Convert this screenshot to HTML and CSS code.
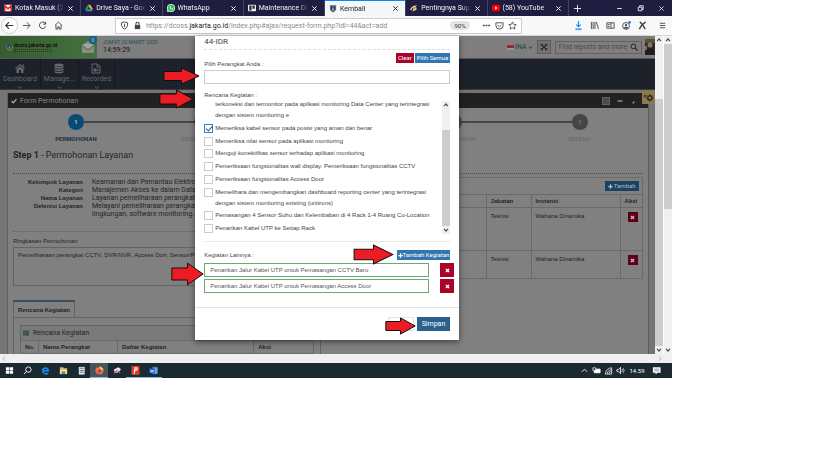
FILE: index.html
```html
<!DOCTYPE html>
<html lang="id">
<head>
<meta charset="utf-8">
<title>Kembali</title>
<link rel="stylesheet" href="styles.css">
</head>
<body>
<svg class="defs" aria-hidden="true">
  <symbol id="x" viewBox="0 0 8 8"><path d="M1.5 1.5l5 5M6.5 1.5l-5 5" stroke="currentColor" stroke-width="1.1" fill="none"/></symbol>
  <symbol id="times" viewBox="0 0 8 8"><path d="M1.5 1.5l5 5M6.5 1.5l-5 5" stroke="currentColor" stroke-width="2.2" fill="none"/></symbol>
  <symbol id="plus" viewBox="0 0 8 8"><path d="M4 0.500v7M.5 4h7" stroke="currentColor" stroke-width="2" fill="none"/></symbol>
  <symbol id="down" viewBox="0 0 8 8"><path d="M1.500 2.500l2.500 3 2.500-3" stroke="currentColor" stroke-width="1.500" fill="none"/></symbol>
  <symbol id="up" viewBox="0 0 8 8"><path d="M1.500 5.500l2.500-3 2.500 3" stroke="currentColor" stroke-width="1.500" fill="none"/></symbol>
  <symbol id="search" viewBox="0 0 10 10"><circle cx="4.200" cy="4.200" r="3" fill="none" stroke="currentColor" stroke-width="1.200"/><path d="M6.500 6.500l3 3" stroke="currentColor" stroke-width="1.500"/></symbol>
  <symbol id="crest" viewBox="0 0 10 10"><path d="M1 1h8v5L5 9.500 1 6z" fill="#cfd4d8"/><path d="M1.500 1.500h7V6L5 9 1.500 6z" fill="#1d4680"/><path d="M5 2.500l1 4H4z" fill="#eef"/><path d="M1 .5h8v1H1z" fill="#333"/><path d="M1 6l4 3.500L9 6" stroke="#d8a02a" fill="none"/></symbol>
  <symbol id="arrow" viewBox="0 0 38 20" preserveAspectRatio="none"><path d="M1 5h18V1l18 9-18 9v-4H1z" fill="#ed1c24" stroke="#111" stroke-width="1" vector-effect="non-scaling-stroke"/></symbol>
</svg>

<main class="desktop">
  <nav class="tabs" aria-label="Tab">
    <div class="tab"><svg class="fav" viewBox="0 0 10 10"><rect y="1" width="10" height="8" rx="1" fill="#fff"/><path d="M1 9V2l4 4 4-4v7" fill="none" stroke="#d93025" stroke-width="2"/></svg><span>Kotak Masuk (2.194</span><svg class="close"><use href="#x"/></svg></div>
    <div class="tab"><svg class="fav" viewBox="0 0 10 10"><path d="M3.500 1h3L10 6.500H7z" fill="#fbbc04"/><path d="M3.500 1L0 6.500 1.500 9 5 3.500z" fill="#0f9d58"/><path d="M3 6.500h7L8.500 9h-7z" fill="#4285f4"/></svg><span>Drive Saya - Google</span><svg class="close"><use href="#x"/></svg></div>
    <div class="tab"><svg class="fav" viewBox="0 0 10 10"><circle cx="5" cy="5" r="5" fill="#e8f8ea"/><path d="M0 10l.8-3L3 9z" fill="#e8f8ea"/><circle cx="5" cy="5" r="4" fill="#2fc351"/><path d="M3.300 2.800c-.8 2 1.500 4.700 4 4.200l.3-1-1.200-.6-.7.6C5 5.700 4.300 5 4.200 4.400l.5-.6-.5-1z" fill="#fff"/></svg><span>WhatsApp</span><svg class="close"><use href="#x"/></svg></div>
    <div class="tab"><svg class="fav" viewBox="0 0 10 10"><rect y="1" width="10" height="8" rx="1" fill="#eceef2"/><path d="M1.500 2h3v6h-3zM5.500 2h3v4h-3z" fill="#30344e"/></svg><span>Maintenance DC D</span><svg class="close"><use href="#x"/></svg></div>
    <div class="tab active"><svg class="fav"><use href="#crest"/></svg><span>Kembali</span><svg class="close"><use href="#x"/></svg></div>
    <div class="tab"><svg class="fav" viewBox="0 0 10 10"><path d="M0 7q3-6 9-5L6 4q-4 0-4 4z" fill="#d9dce4"/><circle cx="6" cy="6" r="2.500" fill="#d99a36"/><path d="M3 9l4-3" stroke="#fff"/></svg><span>Pentingnya Supply</span><svg class="close"><use href="#x"/></svg></div>
    <div class="tab"><svg class="fav" viewBox="0 0 10 10"><rect y="1" width="10" height="8" rx="2" fill="#f00"/><path d="M4 3l3 2-3 2z" fill="#fff"/></svg><span>(58) YouTube</span><svg class="close"><use href="#x"/></svg></div>
    <div class="window-tools">
      <svg viewBox="0 0 10 10"><path d="M5 1v8M1 5h8" stroke="currentColor"/></svg>
      <i></i>
      <svg viewBox="0 0 10 10"><path d="M2.500 5h5" stroke="currentColor"/></svg>
      <svg viewBox="0 0 10 10"><path d="M2.500 3.500h4v4h-4zM4 3.500V2h4v4H6.500" fill="none" stroke="currentColor"/></svg>
      <svg viewBox="0 0 10 10"><path d="M2.500 2.500l5 5M7.500 2.500l-5 5" stroke="currentColor" stroke-width=".8"/></svg>
    </div>
  </nav>

  <div class="toolbar">
    <div class="nav-icons">
      <svg class="back" viewBox="0 0 18 18"><circle cx="9" cy="9" r="8.500" fill="#fff" stroke="#b9b9bd" stroke-width=".7"/><path d="M13 9H5.500M8.500 5.500L5 9l3.500 3.500" fill="none" stroke="#333" stroke-width="1.200"/></svg>
      <svg viewBox="0 0 10 10"><path d="M1 5h7.500M5.500 1.500L9 5 5.500 8.500" fill="none" stroke="currentColor"/></svg>
      <svg viewBox="0 0 10 10"><path d="M8 2.500A3.600 3.600 0 1 0 8.600 6M8.500 1v2.500H6" fill="none" stroke="currentColor" stroke-width="1.100"/></svg>
      <svg viewBox="0 0 10 10"><path d="M1 5l4-3.800L9 5M2.200 4.500V9h2V6.500h1.600V9h2V4.500" fill="none" stroke="currentColor"/></svg>
    </div>
    <div class="address">
      <svg viewBox="0 0 10 10"><path d="M5 1l3.500 1c0 4-1 6-3.500 7C2.500 8 1.500 6 1.500 2zM5 3v4" fill="none" stroke="currentColor"/></svg>
      <svg viewBox="0 0 10 10"><rect x="2" y="4.500" width="6" height="4.500" fill="currentColor"/><path d="M3.300 5V3a1.700 1.700 0 0 1 3.400 0v2" fill="none" stroke="currentColor" stroke-width="1.200"/></svg>
      <p>https://dcoss.<b>jakarta.go.id</b>/index.php#ajax/request-form.php?idl=44&amp;act=add</p>
      <span class="zoom">90%</span>
      <svg viewBox="0 0 10 10"><path d="M1 5h2M4 5h2M7 5h2" stroke="currentColor" stroke-width="1.500"/></svg>
      <svg viewBox="0 0 10 10"><path d="M1 2h8v3a4 4 0 0 1-8 0zM3 4.500l2 1.800 2-1.800" fill="none" stroke="currentColor"/></svg>
      <svg viewBox="0 0 10 10"><path d="M5 1l1.200 2.700 3 .3L7 6l.7 3L5 7.500 2.300 9 3 6 .8 4l3-.3z" fill="none" stroke="currentColor" stroke-width=".9"/></svg>
    </div>
    <div class="tool-icons">
      <svg class="blue" viewBox="0 0 10 10"><path d="M5 0v6M2.500 4L5 6.500 7.500 4M1.500 9h7" fill="none" stroke="currentColor" stroke-width="1.200"/></svg>
      <svg viewBox="0 0 10 10"><path d="M1.500 1v8M3.500 1v8M5.500 1v8M7 1l2.500 8" fill="none" stroke="currentColor"/></svg>
      <svg viewBox="0 0 10 10"><path d="M1 2h8v6H1zM5.500 2v6M2 4h2M2 6h2" fill="none" stroke="currentColor"/></svg>
      <svg viewBox="0 0 10 10"><circle cx="4.500" cy="5.500" r="3.800" fill="none" stroke="currentColor"/><circle cx="4.500" cy="4.500" r="1.300" fill="currentColor"/><path d="M2 7.500q2.500-2 5 0-2.500 2-5 0z" fill="currentColor"/><circle cx="8.500" cy="1.500" r="1.500" fill="#0a84ff"/></svg>
      <svg viewBox="0 0 10 10"><path d="M2 1q3 2 6 8M8.500 1Q4 4 1.500 9" fill="none" stroke="currentColor" stroke-width="1.600"/></svg>
      <svg class="menu" viewBox="0 0 10 10"><path d="M2 2.500h6M2 5h6M2 7.500h6" stroke="currentColor"/></svg>
    </div>
  </div>

  <div class="viewport">
    <div class="page">
      <header class="site-head">
        <div class="brand">
          <svg class="brand-crest"><use href="#crest"/></svg>
          <div class="brand-name"><b>dcoss.jakarta.go.id</b><i></i><i></i></div>
          <div class="mail"><svg viewBox="0 0 12 12"><path d="M0 4l6-4 6 4v8H0z" fill="#8a8d83"/><path d="M1 5l5 4 5-4" fill="none" stroke="#4f6547"/><path d="M2 3h8v2L6 8 2 5z" fill="#a3a69c"/></svg><em>0</em></div>
        </div>
        <div class="clock"><small>JUM'AT, 20 MARET 2020</small><span>14:59:29</span></div>
        <div class="head-tools">
          <a class="lang" href="#"><svg class="flag" viewBox="0 0 8 5"><path d="M0 0h8v3H0z" fill="#9b1c26"/><path d="M0 3h8v2H0z" fill="#999"/></svg>INA<svg class="tiny"><use href="#down"/></svg></a>
          <button class="full" aria-label="Layar penuh"><svg viewBox="0 0 10 10"><path d="M1 1h3L1 4zM9 1v3L6 1zM1 9V6l3 3zM9 9H6l3-3z" fill="currentColor"/><path d="M2 2l6 6M8 2L2 8" stroke="currentColor" stroke-width="1.500"/></svg></button>
          <label class="find"><input type="text" placeholder="Find reports and more" aria-label="Cari"><svg><use href="#search"/></svg></label>
          <svg class="avatar" viewBox="0 0 10 16"><rect width="10" height="16" fill="#2b2a22"/><path d="M0 0h10v4H0z" fill="#555236"/><circle cx="5" cy="6" r="2.500" fill="#8c7463"/><path d="M0 16q0-7 5-7t5 7z" fill="#1d1d1d"/><path d="M0 7h2v4H0z" fill="#77705b"/></svg>
        </div>
      </header>

      <nav class="mainnav">
        <a href="#"><svg viewBox="0 0 10 10"><path d="M0 5l5-4.500L10 5l-.7.700L5 2 .7 5.700z" fill="currentColor"/><path d="M1.500 5.800L5 3l3.500 2.800V9.500H6v-3H4v3H1.500zM7.500 1H9v2.500L7.500 2z" fill="currentColor"/></svg>Dashboard<svg class="tiny"><use href="#down"/></svg></a>
        <a href="#"><svg viewBox="0 0 10 10"><ellipse cx="5" cy="1.500" rx="4.500" ry="1.500" fill="currentColor"/><path d="M.5 2.500q4.500 2 9 0v1.700q-4.500 2-9 0zM.5 5q4.500 2 9 0v1.700q-4.500 2-9 0zM.5 7.500q4.500 2 9 0V9q-4.500 2-9 0z" fill="currentColor"/></svg>Manage...<svg class="tiny"><use href="#down"/></svg></a>
        <a href="#"><svg viewBox="0 0 10 10"><path d="M1 .5h5.500L9 3v6.500H1zM6 .5V3.500h3" fill="none" stroke="currentColor"/><path d="M2.500 5h3v3h-3zM5.500 6.500L7.500 5v3z" fill="currentColor"/></svg>Recorded<svg class="tiny"><use href="#down"/></svg></a>
      </nav>

      <section class="widget">
        <div class="widget-head"><svg viewBox="0 0 10 10"><path d="M1 5l3 3 5-6" fill="none" stroke="currentColor" stroke-width="2.200"/></svg><h1>Form Permohonan</h1><span class="swatch"></span><svg viewBox="0 0 10 10"><path d="M1 5h8" stroke="currentColor" stroke-width="2"/></svg><svg viewBox="0 0 10 10"><path d="M1 9l3-3" stroke="currentColor" stroke-width="2"/></svg></div>
        <div class="widget-body">
          <ol class="steps">
            <li class="now"><b>1</b>PERMOHONAN</li>
            <li><b>2</b>PERSETUJUAN</li>
            <li><b>3</b>PELAKSANAAN</li>
            <li><b>4</b>BUAT LAPORAN</li>
            <li><b>5</b>SELESAI</li>
          </ol>
          <h2><b>Step 1</b> - Permohonan Layanan</h2>
          <div class="columns">
            <div class="left">
              <dl>
                <dt>Kelompok Layanan</dt><dd>Keamanan dan Pemantau Elektronik</dd>
                <dt>Kategori</dt><dd>Manajemen Akses ke dalam Datacenter</dd>
                <dt>Nama Layanan</dt><dd>Layanan pemeliharaan perangkat keamanan</dd>
                <dt>Defenisi Layanan</dt><dd>Melayani pemeliharaan perangkat CCTV,<br>lingkungan, software monitoring.</dd>
              </dl>
              <label class="summary">Ringkasan Permohonan
                <textarea>Pemeliharaan perangkat CCTV, DVR/NVR, Access Dorr, Sensor/Perangkat</textarea>
              </label>
              <div class="subtab"><button>Rencana Kegiatan</button></div>
              <div class="subpanel">
                <h3><svg viewBox="0 0 10 10"><path d="M0 1h10v8H0z" fill="#2f4a35"/><path d="M0 3.500h10M0 6h10M3 1v8" stroke="#58705c"/></svg>Rencana Kegiatan</h3>
                <table class="plan">
                  <tr><th>No.</th><th>Nama Perangkat</th><th>Daftar Kegiatan</th><th>Aksi</th></tr>
                </table>
              </div>
            </div>
            <div class="right">
              <div class="people-head"><button class="add"><svg><use href="#plus"/></svg>Tambah</button></div>
              <table class="people">
                <tr><th>Nama</th><th>Jabatan</th><th>Instansi</th><th>Aksi</th></tr>
                <tr class="tall"><td></td><td>Teknisi</td><td>Wahana Dinamika</td><td><button class="del" aria-label="Hapus"><svg><use href="#times"/></svg></button></td></tr>
                <tr><td></td><td>Teknisi</td><td>Wahana Dinamika</td><td><button class="del" aria-label="Hapus"><svg><use href="#times"/></svg></button></td></tr>
              </table>
            </div>
          </div>
        </div>
      </section>

      <button class="gear" aria-label="Pengaturan"><svg viewBox="0 0 12 12"><circle cx="7.500" cy="7" r="2.300" fill="none" stroke="currentColor" stroke-width="1.500"/><path d="M7.500 3v1.500M7.500 9.500V11M3.800 7h1.500M10 7h1.500M5 4.500l1 1M10 4.500l-1 1M5 9.500l1-1M10 9.500l-1-1" stroke="currentColor"/><circle cx="2.500" cy="5" r="1.200" fill="none" stroke="currentColor"/></svg></button>

      <section class="modal" role="dialog" aria-label="44-IDR">
        <h2>44-IDR</h2>
        <div class="row first"><label for="device">Pilih Perangkat Anda :</label><span><button class="btn red">Clear</button><button class="btn">Pilih Semua</button></span></div>
        <input id="device" class="field" type="text">
        <p class="caption">Rencana Kegiatan :</p>
        <div class="picker">
          <ul>
            <li class="rest">terkoneksi dan termonitor pada aplikasi monitoring Data Center yang terintegrasi<br>dengan sistem monitoring e</li>
            <li><label><input type="checkbox" checked><span>Memeriksa kabel sensor pada posisi yang aman dan benar</span></label></li>
            <li><label><input type="checkbox"><span>Memeriksa nilai sensor pada aplikasi monitoring</span></label></li>
            <li><label><input type="checkbox"><span>Menguji konektifitas sensor terhadap aplikasi monitoring</span></label></li>
            <li><label><input type="checkbox"><span>Pemeriksaan fungsionalitas wall display. Pemeriksaan fungsionalitas CCTV</span></label></li>
            <li><label><input type="checkbox"><span>Pemeriksaan fungsionalitas Access Door</span></label></li>
            <li><label><input type="checkbox"><span>Memelihara dan mengembangkan dashboard reporting center yang terintegrasi<br>dengan sistem monitoring existing (unitrons)</span></label></li>
            <li><label><input type="checkbox"><span>Pemasangan 4 Sensor Suhu dan Kelembaban di 4 Rack 1-4 Ruang Co-Location</span></label></li>
            <li><label><input type="checkbox"><span>Penarikan Kabel UTP ke Setiap Rack</span></label></li>
          </ul>
          <div class="bar list-bar"><svg><use href="#up"/></svg><i></i><svg><use href="#down"/></svg></div>
        </div>
        <div class="row others"><span>Kegiatan Lainnya :</span><button class="btn tight"><svg><use href="#plus"/></svg>Tambah Kegiatan</button></div>
        <div class="entry"><input type="text" aria-label="Kegiatan 1" value="Penarikan Jalur Kabel UTP untuk Pemasangan CCTV Baru"><button class="del big" aria-label="Hapus"><svg><use href="#times"/></svg></button></div>
        <div class="entry"><input type="text" aria-label="Kegiatan 2" value="Penarikan Jalur Kabel UTP untuk Pemasangan Access Door"><button class="del big" aria-label="Hapus"><svg><use href="#times"/></svg></button></div>
        <footer><button class="cancel" aria-label="Batal"></button><button class="save">Simpan</button></footer>
      </section>
    </div>
    <div class="bar inner-bar"><svg><use href="#up"/></svg><i></i><svg><use href="#down"/></svg></div>
    <div class="bar outer-bar"><svg><use href="#up"/></svg><i></i><svg><use href="#down"/></svg></div>
    <svg class="arrow a1"><use href="#arrow"/></svg>
    <svg class="arrow a2"><use href="#arrow"/></svg>
    <svg class="arrow a3"><use href="#arrow"/></svg>
    <svg class="arrow a4"><use href="#arrow"/></svg>
    <svg class="arrow a5"><use href="#arrow"/></svg>
  </div>
  <div class="hbar"><svg viewBox="0 0 8 8"><path d="M5 2L3 4l2 2" fill="none" stroke="#aaa"/></svg><svg viewBox="0 0 8 8"><path d="M3 2l2 2-2 2" fill="none" stroke="#aaa"/></svg></div>

  <footer class="taskbar">
    <div class="apps">
      <span><svg viewBox="0 0 10 10"><path d="M1 1.500h3.700v3.200H1zM5.300 1.500H9v3.200H5.300zM1 5.300h3.700v3.200H1zM5.300 5.300H9v3.200H5.300z" fill="#fff"/></svg></span>
      <span><svg viewBox="0 0 10 10"><circle cx="6" cy="4" r="3" fill="none" stroke="#fff"/><path d="M4 6L1 9" stroke="#fff"/></svg></span>
      <span><svg viewBox="0 0 10 10"><path d="M2.200 5.500H8C8 1 2.500 1.500 1.500 5M2 5.500c0 3.500 4 4 6 2.500" fill="none" stroke="#1587e0" stroke-width="2"/></svg></span>
      <span><svg viewBox="0 0 10 10"><path d="M1 1.500h3.500l1 1H9V9H1z" fill="#e8b84a"/><path d="M1 4h8v5H1z" fill="#f7df90"/><path d="M3 6h4v3H3z" fill="#3d91d3"/></svg></span>
      <span><svg viewBox="0 0 10 10"><rect x="2" y="1" width="6.500" height="8.500" fill="#e5e9ea"/><path d="M3 2.500h4.500M3 5h4.500M3 7h4.500" stroke="#54656b"/></svg></span>
      <span class="on active"><svg viewBox="0 0 10 10"><path d="M5 .500q4 1 4.500 5A4.500 4.500 0 1 1 1 3l1-2 1 1.500z" fill="#ff7a1a"/><path d="M5 .5q4 1 4.500 4L6 4z" fill="#ffcf3a"/><circle cx="5.300" cy="5.600" r="2" fill="#8a42d6"/><path d="M1 5q2 3 6 3-4 2-6-3z" fill="#f3304d"/></svg></span>
      <span><svg viewBox="0 0 10 10"><path d="M1 4l5-2.500 3 2L6 7l-4 1z" fill="#dbe5ef"/><path d="M1 8l4-3M6 6l2 2" stroke="#d7434c" stroke-width="1.300"/></svg></span>
      <span class="on"><svg viewBox="0 0 10 10"><rect x=".5" width="9" height="10" rx="1" fill="#df3a26"/><path d="M3.500 8.500L4.500 2h2q1.500 2-2 3" fill="none" stroke="#fff" stroke-width="1.200"/></svg></span>
      <span class="on"><svg viewBox="0 0 10 10"><path d="M4 1h5.500v8H4z" fill="#3f8fe0"/><path d="M4 3h5.500M4 5h5.500M4 7h5.500" stroke="#bcdcff" stroke-width=".6"/><path d="M.5 2.500h6v5.500h-6z" fill="#1a5dbe"/><path d="M1.500 4l1 3 1-2.500 1 2.500 1-3" fill="none" stroke="#fff" stroke-width=".7"/></svg></span>
    </div>
    <div class="tray">
      <svg viewBox="0 0 10 10"><path d="M2 6.500l3-3 3 3" fill="none" stroke="currentColor"/></svg>
      <svg viewBox="0 0 10 10"><path d="M2.500 3.500H9v4H2.500z" fill="#fff" stroke="#fff"/><path d="M1 2h3v3H1z" fill="#1b2a30" stroke="#fff" stroke-width=".8"/></svg>
      <svg viewBox="0 0 10 10"><path d="M1.500 9A7 7 0 0 1 8.500 2M3.500 9a5 5 0 0 1 5-5M5.500 9a3 3 0 0 1 3-3M8.500 2v7h-7" fill="none" stroke="currentColor" stroke-width=".8"/></svg>
      <svg viewBox="0 0 10 10"><path d="M1 4h1.500L5 1.500v7L2.500 6H1z" fill="none" stroke="currentColor" stroke-width=".9"/><path d="M6.500 3.500q1 1.500 0 3M8 2.500q2 2.500 0 5" fill="none" stroke="currentColor" stroke-width=".8"/></svg>
      <time>14.59</time>
      <svg viewBox="0 0 10 10"><path d="M1 1.500h8.500v6H6l-2 2v-2H1z" fill="#fff"/><path d="M2.500 3.500h5.500M2.500 5.500h5.500" stroke="#62727a" stroke-width=".8"/></svg>
    </div>
  </footer>
</main>
</body>
</html>
```
FILE: styles.css
```css
* { box-sizing: border-box; }
body { margin: 0; background: #fff; font: 6px/8px "Liberation Sans", Arial, sans-serif; }
h1, h2, h3, p, ul, ol, dl, dd { margin: 0; padding: 0; font-size: inherit; font-weight: normal; }
ul, ol { list-style: none; }
button, input, textarea { font: inherit; color: inherit; margin: 0; padding: 0; border: 0; border-radius: 0; background: none; outline: 0; }
a { color: inherit; text-decoration: none; }
svg { display: block; flex: none; }
.defs { position: absolute; width: 0; height: 0; }
.desktop { width: 82%; overflow: hidden; }

/* browser tabs */
.tabs { display: flex; height: 16px; background: #1f1d40; color: #f3f3f7; font: 7px/16px Roboto, sans-serif; }
.tab { flex: 0 0 12.1%; min-width: 0; display: flex; align-items: center; gap: 3px; padding: 0 6px 0 4px; border-right: 1px solid #43415f; }
.tab span { flex: 1; min-width: 0; white-space: nowrap; -webkit-mask-image: linear-gradient(90deg, #000 80%, transparent 100%); mask-image: linear-gradient(90deg, #000 80%, transparent 100%); }
.tab.active { background: #f5f6f7; color: #222; border-top: 1px solid #0a84ff; }
.fav { width: 8px; height: 8px; }
.close { width: 7px; height: 7px; }
.window-tools { flex: 1; display: flex; align-items: center; justify-content: space-between; padding: 0 6px 0 4px; }
.window-tools svg { width: 9px; height: 9px; }
.window-tools i { width: 10px; }

/* browser toolbar */
.toolbar { display: flex; align-items: center; height: 20px; background: #f8f8f9; color: #444; border-bottom: 1px solid #d5d5d8; }
.toolbar svg { width: 9px; height: 9px; }
.nav-icons { display: flex; align-items: center; gap: 7px; padding-left: 1px; width: 115px; }
.nav-icons .back { width: 17px; height: 17px; margin-right: -3px; }
.address { flex: 1; display: flex; align-items: center; gap: 4px; height: 16px; padding: 0 4px; background: #fff; border: 1px solid #ccccd0; }
.address p { flex: 1; white-space: nowrap; color: #8b8b90; font: 7px/12px Roboto, sans-serif; }
.address b { font-weight: normal; color: #222; }
.zoom { padding: 0 4px; margin-right: 8px; border-radius: 5px; background: #e4e4e7; font: 6px/9px Roboto, sans-serif; color: #333; }
.tool-icons { display: flex; align-items: center; justify-content: flex-end; gap: 7px; width: 150px; padding-right: 5px; }
.tool-icons .blue { color: #0a84ff; }
.tool-icons .menu { margin-left: 4px; }

/* scrolled page */
.viewport { position: relative; display: flex; }
.page { position: relative; flex: 1; min-width: 0; background: #757575; color: #252525; }
.bar { display: flex; flex-direction: column; align-items: center; justify-content: space-between; width: 8px; background: #f0f0f0; color: #444; }
.bar svg { width: 6px; height: 8px; }
.bar i { width: 100%; background: #cdcdcd; }
.inner-bar i { flex: 1; margin-top: 55px; }
.outer-bar { margin-left: 1px; }
.outer-bar i { height: 165px; margin-bottom: auto; }
.hbar { display: flex; justify-content: space-between; height: 9px; padding-right: 8px; background: #f0f0f0; }
.hbar svg { width: 8px; height: 9px; }

.site-head { display: flex; height: 23px; background: #7e7e7e; border-bottom: 1px solid #555; }
.brand { display: flex; align-items: center; gap: 1px; width: 97px; padding-left: 6px; background: linear-gradient(90deg, #355c2f, #477240); color: #111; }
.brand-crest { width: 7px; height: 9px; opacity: .6; }
.brand-name { width: 42px; font: 5px/6px Roboto, sans-serif; white-space: nowrap; }
.brand-name b { display: block; }
.brand-name i { display: block; width: 38px; border-top: 1px dotted #22351e; margin-top: 1px; }
.mail { position: relative; margin-left: 25px; }
.mail svg { width: 12px; height: 12px; }
.mail em { position: absolute; left: 7px; top: -5px; width: 8px; height: 8px; border-radius: 4px; background: #12608c; color: #b5c4cc; font: 5px/8px Roboto, sans-serif; text-align: center; }
.clock { display: flex; flex-direction: column; padding: 3px 6px; }
.clock small { font: 5px/7px Roboto, sans-serif; color: #254f58; }
.clock span { font: 7px/8px Roboto, sans-serif; color: #161616; }
.head-tools { margin-left: auto; display: flex; align-items: center; }
.lang { display: flex; align-items: center; gap: 1px; margin-right: 4px; color: #1f3a54; font: 7px/8px Roboto, sans-serif; }
.flag { width: 7px; height: 5px; }
.tiny { width: 5px; height: 5px; }
.full { padding: 2px; border: 1px solid #5c5c5c; background: #737373; }
.full svg { width: 8px; height: 8px; }
.find { display: flex; align-items: center; width: 87px; height: 13px; margin: 0 3px 0 4px; padding: 0 3px; border: 1px solid #626262; }
.find input { flex: 1; min-width: 0; font: 7px/8px Roboto, sans-serif; }
.find input::placeholder { color: #4c4c4c; }
.find svg { width: 8px; height: 8px; }
.avatar { width: 10px; height: 16px; }

.mainnav { display: flex; height: 31px; background: #1d212a; color: #63676e; border-bottom: 1px solid #3a3a3a; }
.mainnav a { display: flex; flex-direction: column; align-items: center; padding: 4px 3px 0; font: 7px/11px Roboto, sans-serif; border-right: 1px solid #14171d; }
.mainnav a > svg:first-child { width: 10px; height: 11px; }

.widget { margin: 3px 6px 0 7px; border-left: 1px solid #5e5e5e; border-right: 1px solid #5e5e5e; background: #808080; }
.widget-head { display: flex; align-items: center; gap: 3px; height: 15px; padding: 0 4px 0 3px; background: #212121; color: #999; }
.widget-head h1 { flex: 1; font: 7px/8px Roboto, sans-serif; color: #898989; }
.widget-head svg { width: 6px; height: 6px; margin-right: 6px; color: #aaa; }
.widget-head svg:first-child { margin: 0; }
.swatch { width: 8px; height: 8px; margin-right: 4px; background: #4c4c4c; border: 1px solid #606060; }
.widget-body { padding: 6px 5px 0; }
.steps { display: flex; text-align: center; color: #666; font-family: Roboto, sans-serif; }
.steps li { position: relative; flex: 1; }
.steps li + li::before { content: ""; position: absolute; right: 50%; top: 7px; width: 100%; height: 2px; background: #414854; }
.steps li b { position: relative; z-index: 1; display: block; width: 16px; height: 16px; margin: 0 auto 5px; border-radius: 8px; background: #454545; color: #777; line-height: 16px; font-weight: normal; }
.steps .now { color: #1d3143; font-weight: bold; }
.steps .now b { background: #0b4b73; color: #b3bcc2; z-index: 2; font-weight: bold; }
.widget h2 { padding-bottom: 12px; margin-top: 6px; border-bottom: 1px dotted #4a4a4a; font: 9px/12px Roboto, sans-serif; }
.columns { display: grid; grid-template-columns: 1fr 1fr; gap: 13px; padding: 3px 0 0; }
dl { display: grid; grid-template-columns: 70px 1fr; column-gap: 9px; padding: 1px 0 13px; border-bottom: 1px dotted #606060; }
dt { text-align: right; font-weight: bold; white-space: nowrap; }
dd { font-family: Roboto, sans-serif; font-size: 7px; white-space: nowrap; }
.left { min-width: 0; }
.summary { display: block; margin-top: 5px; }
.summary textarea { display: block; width: 100%; height: 39px; margin-top: 2px; padding: 3px 4px; border: 1px solid #646464; resize: none; overflow: hidden; white-space: pre; }
.subtab { margin-top: 14px; border-bottom: 1px solid #646464; }
.subtab button { display: block; height: 17px; padding: 0 4px; border: 1px solid #646464; border-top: 2px solid #3d4d5b; border-bottom: 0; font-weight: bold; }
.subpanel { padding: 7px 6px 0; border: 1px solid #646464; border-top: 0; border-bottom: 0; }
.subpanel h3 { display: flex; align-items: center; gap: 4px; height: 15px; padding-left: 2px; border: 1px solid #646464; border-bottom: 0; background: #7a7a7a; font: 7px/8px Roboto, sans-serif; }
.subpanel h3 svg { width: 6px; height: 6px; }
table { width: 100%; border-collapse: collapse; table-layout: fixed; }
th, td { border: 1px solid #6a6a6a; padding: 0 4px; text-align: left; vertical-align: top; }
.plan th { height: 13px; vertical-align: middle; }
.plan th:nth-child(1) { width: 18px; }
.plan th:nth-child(2) { width: 79px; }
.plan th:nth-child(4) { width: 60px; }
.people-head { display: flex; justify-content: flex-end; height: 17px; padding: 3px; border: 1px solid #6a6a6a; border-bottom: 0; }
.add { display: flex; align-items: center; gap: 1px; height: 10px; padding: 0 3px; background: #1c4262; color: #b2bdc6; font-family: Roboto, sans-serif; }
.add svg, .btn svg { width: 5px; height: 5px; }
.people th { height: 13px; vertical-align: middle; }
.people th:nth-child(2) { width: 45px; }
.people th:nth-child(3) { width: 89px; }
.people th:nth-child(4) { width: 22px; }
.people td { height: 28px; padding-top: 4px; }
.people td:last-child { padding-left: 7px; }
.people .tall td { height: 43px; }
.del { display: grid; place-items: center; width: 10px; height: 10px; background: #5c0019; color: #bbb; }
.del svg { width: 5px; height: 5px; }
.gear { position: absolute; right: 0; top: 54px; padding: 1px; background: #8b7b4c; color: #292820; }
.gear svg { width: 11px; height: 12px; }

/* dialog */
.modal { position: absolute; z-index: 3; left: 0; right: 0; top: 0; width: 264px; margin: 0 auto; padding: 0 9px 9px; background: #fff; color: #444; box-shadow: 0 2px 6px rgba(0, 0, 0, .5); }
.modal h2 { height: 14px; font: 8px/11px Roboto, sans-serif; border-bottom: 1px dashed #ddd; }
.row { display: flex; justify-content: space-between; }
.first { height: 20px; padding-top: 3px; }
.first label { padding-top: 7px; }
.first span { display: flex; gap: 1px; }
.btn { display: flex; align-items: center; gap: 1px; height: 10px; padding: 0 2px; background: #3276b1; color: #fff; font-family: Roboto, sans-serif; }
.btn.red { background: #a90329; }
.btn.tight { gap: 0; padding: 0 1px; }
.field { display: block; width: 100%; height: 14px; padding: 0 5px; border: 1px solid #ccc; }
.caption { margin-top: 7px; }
.picker { display: flex; gap: 3px; padding-bottom: 7px; border-bottom: 1px solid #e8e8e8; }
.picker ul { flex: 1; display: flex; flex-direction: column; justify-content: space-between; height: 135px; line-height: 11px; white-space: nowrap; }
.rest { padding-left: 11px; }
.picker label { display: flex; gap: 2px; }
.picker input { appearance: none; position: relative; width: 9px; height: 9px; margin-top: 1px; border: 1px solid #ccc; background: #fff; }
.picker input:checked { border-color: #3b7dbd; }
.picker input:checked::after { content: ""; position: absolute; left: 2px; top: 0; width: 3px; height: 5px; border: solid #1c5a9c; border-width: 0 1px 1px 0; transform: rotate(40deg); }
.list-bar { margin-top: 2px; }
.list-bar i { flex: 1; margin-top: 21px; }
.others { height: 21px; padding-top: 8px; }
.others span { line-height: 10px; }
.entry { display: flex; justify-content: space-between; height: 14px; margin: 0 -4px 2px 0; }
.entry input { width: 225px; padding: 0 5px; border: 1px solid #6fa873; color: #555; }
.del.big { width: 14px; height: 14px; background: #a90329; color: #fff; }
.modal footer { display: flex; justify-content: flex-end; gap: 3px; margin: 14px -9px 0; padding: 9px 9px 0; border-top: 1px solid #e5e5e5; }
.cancel { width: 26px; height: 14px; border: 1px solid #e2e2e2; }
.save { height: 14px; padding: 0 5px; background: #2a5f8e; color: #fff; font: 7px/8px Roboto, sans-serif; }

/* pointers over the dialog */
.arrow { position: absolute; z-index: 4; width: 37px; height: 18px; }
.a1 { left: 163px; top: 31px; }
.a2 { left: 159px; top: 53px; height: 20px; width: 35px; }
.a3 { left: 171px; top: 226px; height: 24px; width: 33px; }
.a4 { left: 353px; top: 208px; height: 21px; width: 41px; }
.a5 { left: 385px; top: 281px; width: 31px; }

/* desktop taskbar */
.taskbar { display: flex; justify-content: space-between; height: 15px; background: #1b2a30; color: #fff; }
.apps { display: flex; }
.apps span { display: grid; place-items: center; width: 18px; border-bottom: 1px solid transparent; }
.apps svg { width: 9px; height: 9px; }
.apps .on { border-bottom-color: #76b9ed; }
.apps .active { background: #46555b; }
.tray { display: flex; align-items: center; gap: 3px; padding-right: 11px; font: 6px/8px Roboto, sans-serif; }
.tray svg { width: 9px; height: 9px; }
.tray time { margin: 0 4px 0 2px; }
```
